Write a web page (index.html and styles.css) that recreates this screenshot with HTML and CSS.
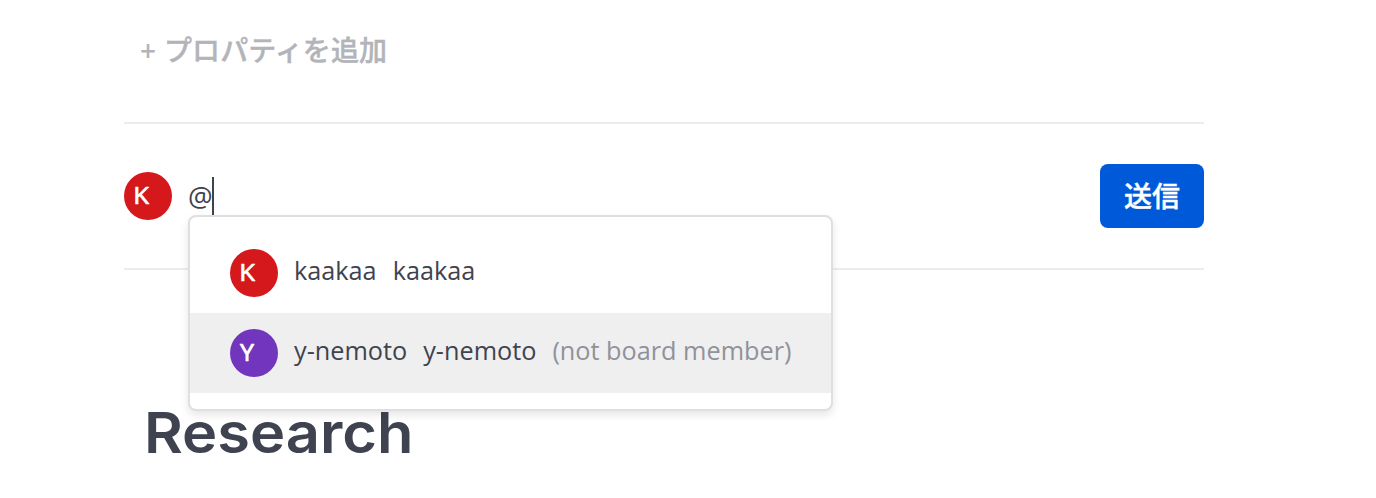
FILE: index.html
```html
<!DOCTYPE html>
<html lang="ja">
<head>
<meta charset="utf-8">
<title>Research</title>
<link rel="stylesheet" href="styles.css">
</head>
<body>
<main class="card-detail">
  <button class="add-property"><span class="plus">+</span><span class="add-label">プロパティを追加</span></button>
  <section class="comment-row">
    <svg class="avatar avatar-red" viewBox="0 0 48 48"><text class="initial" x="9.2" y="31.5" textLength="15.8" lengthAdjust="spacingAndGlyphs">K</text></svg>
    <div class="editor">
      <span class="editor-text">@</span><span class="caret"></span>
      <div class="mentions">
        <div class="mention">
          <svg class="avatar avatar-red" viewBox="0 0 48 48"><text class="initial" x="9.2" y="31.5" textLength="15.8" lengthAdjust="spacingAndGlyphs">K</text></svg>
          <span class="name">kaakaa</span><span class="name">kaakaa</span>
        </div>
        <div class="mention selected">
          <svg class="avatar avatar-purple" viewBox="0 0 48 48"><text class="initial" x="10" y="31.5" textLength="14" lengthAdjust="spacingAndGlyphs">Y</text></svg>
          <span class="name">y-nemoto</span><span class="name">y-nemoto</span><span class="hint">(not board member)</span>
        </div>
      </div>
    </div>
    <button class="send">送信</button>
  </section>
  <h1 class="title">Research</h1>
</main>
</body>
</html>
```
FILE: styles.css
```css
* { box-sizing: border-box; }
body {
  margin: 0;
  height: 498px;
  overflow: hidden;
  background: #fff;
  color: #3f4350;
  font-family: "Open Sans", "Noto Sans CJK JP", sans-serif;
}
button { border: 0; margin: 0; background: none; }
.card-detail { width: 1080px; margin-left: 124px; padding-top: 30px; }
.add-property {
  display: flex;
  align-items: center;
  gap: 8px;
  height: 40px;
  padding: 0 0 0 16px;
  color: #b2b4b9;
  font: 500 28px/40px "Noto Sans CJK JP", sans-serif;
  white-space: nowrap;
}
.add-label { -webkit-text-stroke: .4px #b2b4b9; letter-spacing: .1px; margin-top: -2px; }
.plus { font: 600 28px/40px "Open Sans", sans-serif; }
.comment-row {
  display: flex;
  align-items: center;
  height: 148px;
  margin-top: 52px;
  border-top: 2px solid #ededee;
  border-bottom: 2px solid #ededee;
}
.avatar { width: 48px; height: 48px; flex: none; border-radius: 50%; }
.avatar-red { background: #d4181c; }
.avatar-purple { background: #7236be; }
.initial {
  fill: #fff;
  stroke: #fff;
  stroke-width: .7px;
  stroke-linejoin: round;
  font: 400 23px "Open Sans", sans-serif;
}
.editor {
  position: relative;
  flex: 1;
  display: flex;
  align-items: center;
  height: 40px;
  margin-left: 16px;
}
.editor-text { font-size: 27.5px; line-height: 40px; width: 24px; padding-top: 1px; }
.caret { width: 2px; height: 38px; background: #3f4350; }
.mentions {
  position: absolute;
  z-index: 1;
  top: 39px;
  left: 0;
  width: 645px;
  height: 196px;
  padding: 16px 0;
  overflow: hidden;
  background: #fff;
  border: 2px solid #dfdfe1;
  border-radius: 8px;
  box-shadow: 0 4px 8px rgba(0, 0, 0, .1);
}
.mention {
  display: flex;
  align-items: center;
  gap: 16px;
  height: 80px;
  padding: 0 40px;
  font-size: 25.25px;
  line-height: 40px;
  white-space: nowrap;
}
.name, .hint { margin-top: -6px; }
.selected { background: #efefef; }
.hint { color: #8f929a; }
.send {
  width: 104px;
  height: 64px;
  padding: 0 0 2px;
  border-radius: 8px;
  background: #0059d9;
  color: #fff;
  font: 500 28px/62px "Noto Sans CJK JP", sans-serif;
  -webkit-text-stroke: .4px #fff;
}
.title {
  margin: 127px 0 0 20px;
  font: 600 56px/72px Inter, sans-serif;
  transform: scaleX(1.063);
  transform-origin: left;
}
```
